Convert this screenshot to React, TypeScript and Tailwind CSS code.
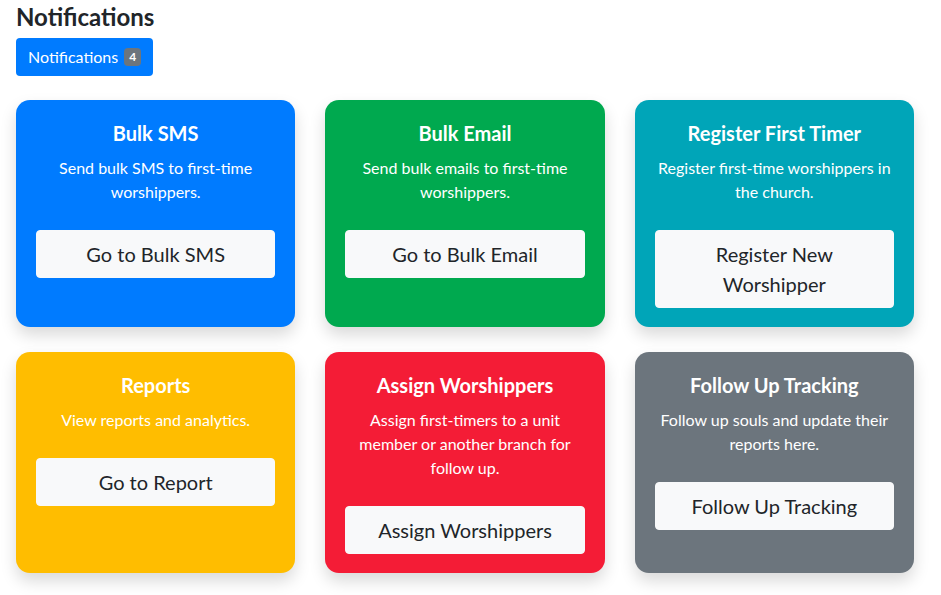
import React from 'react';

type Card = {
  title: string;
  text: string;
  action: string;
  bg: string;
};

const cards: Card[] = [
  { title: 'Bulk SMS', text: 'Send bulk SMS to first-time worshippers.', action: 'Go to Bulk SMS', bg: 'bg-[#007bff]' },
  { title: 'Bulk Email', text: 'Send bulk emails to first-time worshippers.', action: 'Go to Bulk Email', bg: 'bg-[#00a94f]' },
  { title: 'Register First Timer', text: 'Register first-time worshippers in the church.', action: 'Register New Worshipper', bg: 'bg-[#00a5b8]' },
  { title: 'Reports', text: 'View reports and analytics.', action: 'Go to Report', bg: 'bg-[#ffbd00]' },
  { title: 'Assign Worshippers', text: 'Assign first-timers to a unit member or another branch for follow up.', action: 'Assign Worshippers', bg: 'bg-[#f41c36]' },
  { title: 'Follow Up Tracking', text: 'Follow up souls and update their reports here.', action: 'Follow Up Tracking', bg: 'bg-[#6c757d]' },
];

const App = () => {
  return (
    <div className="min-h-screen bg-white px-4 pt-[3px] text-[#212529] font-['Lato','Noto_Sans',sans-serif]">
      <h4 className="text-[24px] font-bold leading-[1.2] mb-[6px]">Notifications</h4>
      <button className="flex items-center gap-[6px] h-[38px] px-3 rounded-[4px] bg-[#007bff] text-white text-[16px]">
        Notifications
        <span className="rounded-[4px] bg-[#6c757d] px-[5px] text-[12px] font-bold leading-[18px]">4</span>
      </button>

      <div className="mt-[24px] w-[898px] grid grid-cols-3 gap-x-[30px] gap-y-[25px]">
        {cards.map((c) => (
          <div
            key={c.title}
            className={`${c.bg} rounded-[14px] px-5 pt-[21px] pb-[19px] text-center text-white shadow-[0_0.5rem_1rem_rgba(0,0,0,0.15)]`}
          >
            <h5 className="text-[20px] font-bold leading-[24px] mb-[11px]">{c.title}</h5>
            <p className="text-[16px] leading-[24px] mb-[26px]">{c.text}</p>
            <button className="w-full rounded-[4px] border border-[#f8f9fa] bg-[#f8f9fa] px-4 py-2 text-[20px] leading-[30px] text-[#212529]">
              {c.action}
            </button>
          </div>
        ))}
      </div>
    </div>
  );
};

export default App;
